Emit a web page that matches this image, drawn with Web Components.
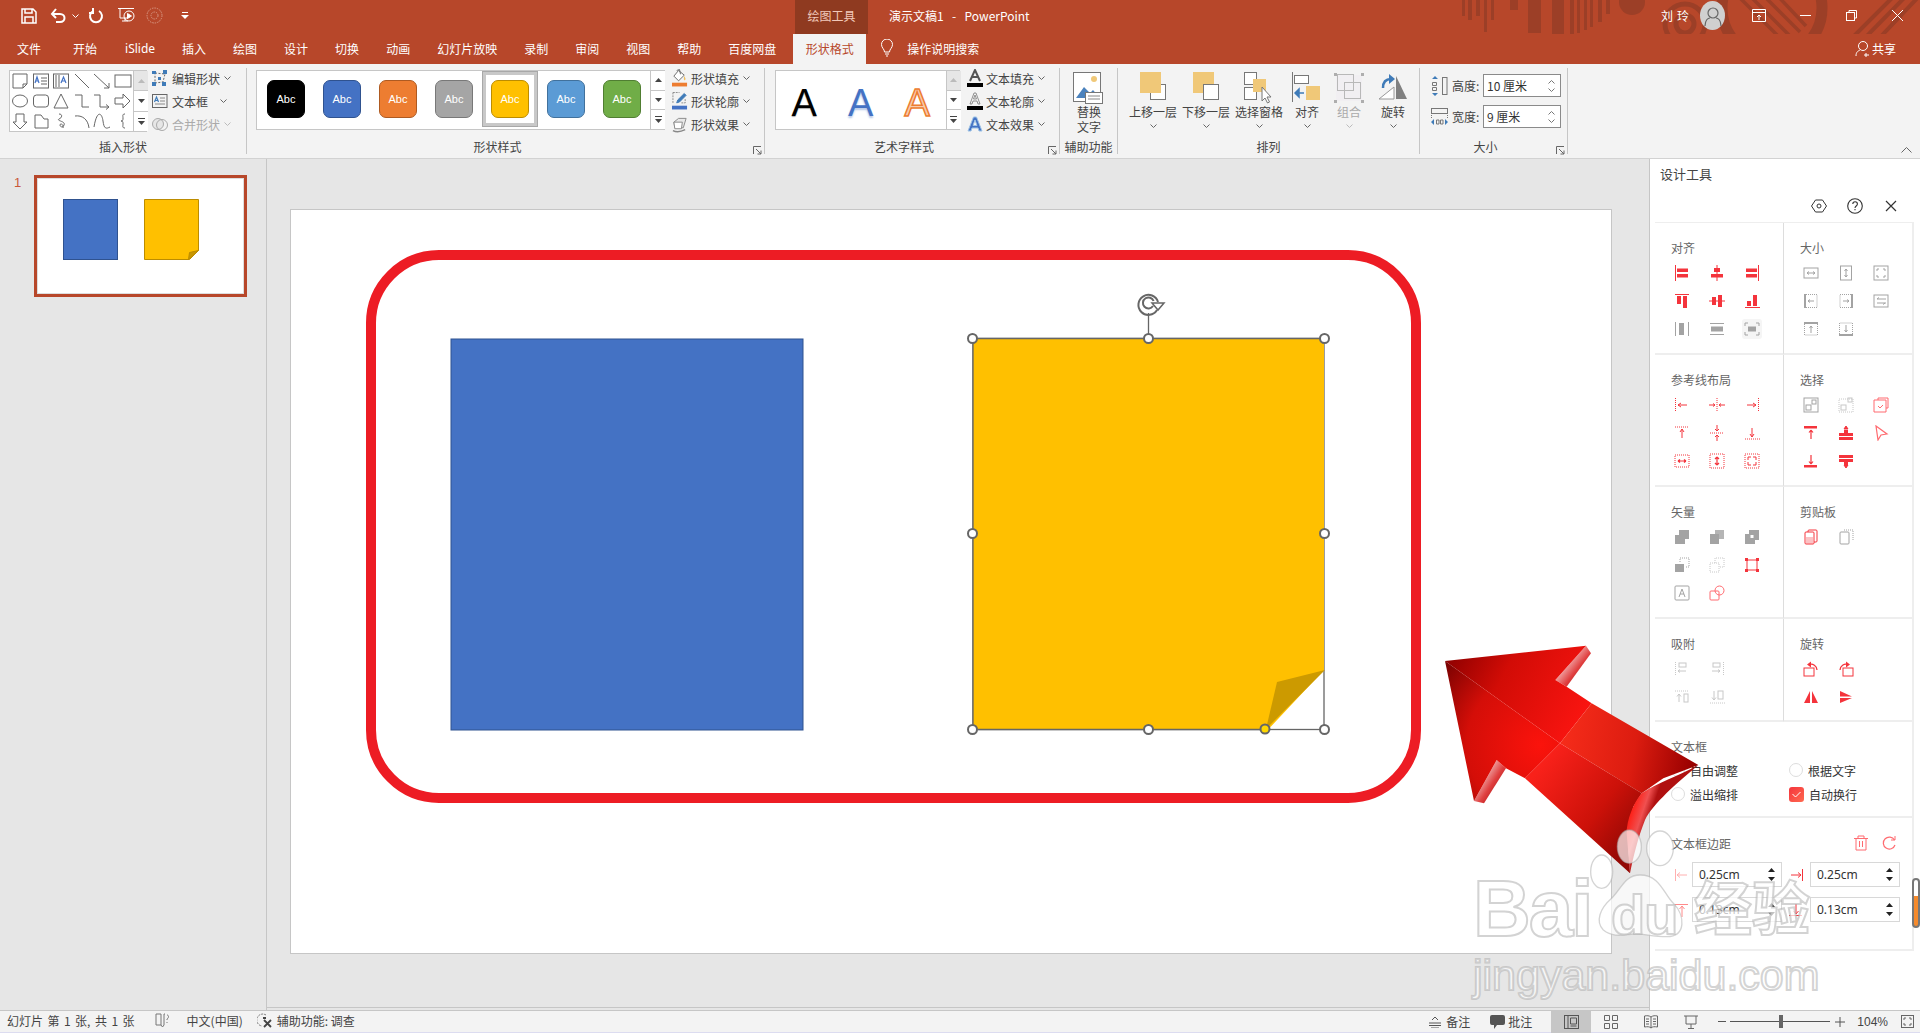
<!DOCTYPE html>
<html>
<head>
<meta charset="utf-8">
<title>PowerPoint</title>
<style>
html,body{margin:0;padding:0;width:1920px;height:1033px;overflow:hidden;background:#e6e6e6;}
body{font-family:"Noto Sans CJK SC","Liberation Sans",sans-serif;font-size:12px;color:#444;}
</style>
</head>
<body>
<ppt-app>
  <ppt-titlebar></ppt-titlebar>
  <ppt-tabs></ppt-tabs>
  <ppt-ribbon>
    <rb-group label="插入形状" style="width:247px">
      <shape-gallery style="margin:2px 0 0 9px"></shape-gallery>
      <rb-col style="margin-left:5px">
        <rb-btn icon="edit" text="编辑形状" gap="4"></rb-btn>
        <rb-btn icon="tbox" text="文本框" gap="12"></rb-btn>
        <rb-btn icon="merge" text="合并形状" gap="4" disabled></rb-btn>
      </rb-col>
    </rb-group>
    <rb-group label="形状样式" launcher style="width:518px">
      <style-gallery style="margin:2px 0 0 9px"></style-gallery>
      <rb-col style="margin-left:7px">
        <rb-btn icon="fill" text="形状填充" gap="4" tg="3"></rb-btn>
        <rb-btn icon="outline" text="形状轮廓" gap="4" tg="3"></rb-btn>
        <rb-btn icon="effect" text="形状效果" gap="4" tg="3"></rb-btn>
      </rb-col>
    </rb-group>
    <rb-group label="艺术字样式" launcher style="width:295px">
      <art-gallery style="margin:2px 0 0 10px"></art-gallery>
      <rb-col style="margin-left:7px">
        <rb-btn icon="tfill" text="文本填充" gap="4" tg="3"></rb-btn>
        <rb-btn icon="toutline" text="文本轮廓" gap="4" tg="3"></rb-btn>
        <rb-btn icon="teffect" text="文本效果" gap="4" tg="3"></rb-btn>
      </rb-col>
    </rb-group>
    <rb-group label="辅助功能" style="width:58px">
      <rb-big icon="alt" style="width:58px" nochev><span>替换</span><br><span>文字</span></rb-big>
    </rb-group>
    <rb-group label="排列" style="width:302px">
      <rb-big icon="fwd" style="width:54px;margin-left:8px">上移一层</rb-big>
      <rb-big icon="bwd" style="width:52px">下移一层</rb-big>
      <rb-big icon="pane" style="width:54px" nochev>选择窗格</rb-big>
      <rb-big icon="align" style="width:42px">对齐</rb-big>
      <rb-big icon="group" style="width:42px" disabled>组合</rb-big>
      <rb-big icon="rotate" style="width:46px">旋转</rb-big>
    </rb-group>
    <rb-group label="大小" launcher style="width:148px">
      <size-fields></size-fields>
    </rb-group>
    <rb-collapse></rb-collapse>
  </ppt-ribbon>
  <ppt-main>
    <ppt-thumbs></ppt-thumbs>
    <ppt-stage></ppt-stage>
    <design-panel></design-panel>
  </ppt-main>
  <ppt-status></ppt-status>
  <big-arrow></big-arrow>
  <baidu-mark></baidu-mark>
</ppt-app>

<script>
const R='#f4343c',G='#a3a3a3';
const bar=(d)=>`<path class="f" d="${d}"/>`;
const dot=(d)=>`<path stroke-dasharray="1 1" d="${d}"/>`;
const PANEL={
 alL:`<path d="M1.5 0v16"/>`+bar('M3 3.5h11v3.5H3zM3 9h11v3.5H3z'),
 alC:`<path d="M8 0v16"/>`+bar('M5 3h6v4H5zM2 9h12v3.5H2z'),
 alR:`<path d="M14.5 0v16"/>`+bar('M2 3.5h11v3.5H2zM2 9h11v3.5H2z'),
 alT:`<path d="M1 1.5h14"/>`+bar('M3 3h4v8H3zM9 3h4v12H9z'),
 alM:`<path d="M0 8h16"/>`+bar('M3 4h4v8H3zM9 2h4v12H9z'),
 alB:`<path d="M1 14.5h15"/>`+bar('M3 8h4v5H3zM9 2h4v11H9z'),
 dH:`<path d="M1.5 1v14M14.5 1v14"/>`+bar('M5 2h5v12H5z'),
 dV:`<path d="M1 2.5h14M1 13.5h14"/>`+bar('M2 5.5h12v5H2z'),
 dB:`<path d="M1 5V2h3M12 2h3v3M1 11v3h3M12 14h3v-3"/>`+bar('M4 5.5h8v5H4z'),
 sW:`<rect x="1" y="3" width="14" height="10"/><path d="M4 8h8M4 8l2-1.5M4 8l2 1.500M12 8l-2-1.500M12 8l-2 1.500"/>`,
 sH:`<rect x="2.500" y="1" width="11" height="14"/><path d="M8 4v8M8 4L6.500 6M8 4l1.500 2M8 12l-1.500-2M8 12l1.500-2"/>`,
 sB:`<rect x="1" y="1" width="14" height="14"/><path d="M4 6V4h2M10 4h2v2M4 10v2h2M10 12h2v-2"/>`,
 sL:`<path stroke-width="2" d="M2 1v14"/>`+dot('M3 1.500h11v13H3')+`<path d="M5 8h6M5 8l2-1.500M5 8l2 1.500"/>`,
 sR:`<path stroke-width="2" d="M14 1v14"/>`+dot('M13 1.500H2v13h11')+`<path d="M5 8h6M11 8L9 6.500M11 8L9 9.500"/>`,
 sLR:`<rect x="1" y="2" width="14" height="12"/><path d="M4 6h9M4 10h9M4 6l2-1.500M12 10l-2 1.500"/>`,
 sT:`<path stroke-width="2" d="M1 2h14"/>`+dot('M1.500 3v11h13V3')+`<path d="M8 5v7M8 5L6.500 7M8 5l1.500 2"/>`,
 sD:`<path stroke-width="2" d="M1 14h14"/>`+dot('M1.500 13V2h13v11')+`<path d="M8 4v7M8 11L6.500 9M8 11l1.500-2"/>`,
 gL:dot('M1.500 1v14')+`<path d="M4 8h9M4 8l3-2M4 8l3 2"/>`,
 gC:dot('M8 1v14')+`<path d="M0 8h6M6 8L4 6.500M6 8L4 9.500M16 8h-6M10 8l2-1.500M10 8l2 1.500"/>`,
 gR:dot('M14.500 1v14')+`<path d="M3 8h9M12 8L9 6M12 8l-3 2"/>`,
 gT:dot('M1 2h14')+`<path d="M8 4v9M8 4L6 7M8 4l2 3"/>`,
 gM:dot('M1 8h14')+`<path d="M8 0v6M8 6L6 4M8 6l2-2M8 16v-6M8 10l-2 2M8 10l2 2"/>`,
 gB:dot('M1 14h15')+`<path d="M8 3v9M8 12l-2-3M8 12l2-3"/>`,
 gW:dot('M1 2h14v12H1z')+`<path stroke-width="1.200" d="M4 8h8M4 8l2-1.500M4 8l2 1.500M12 8l-2-1.500M12 8l-2 1.500"/>`,
 gH:dot('M1 1h14v14H1z')+`<path stroke-width="1.200" d="M8 4v8M8 4L6 6M8 4l2 2M8 12l-2-2M8 12l2-2"/>`,
 gF:dot('M1 1h14v14H1z')+`<path d="M4 7V4h3M9 4h3v3M4 9v3h3M9 12h3V9"/>`,
 sl1:`<rect x="1" y="1" width="14" height="14"/><rect x="3" y="8" width="5" height="5"/><rect x="9" y="3" width="4" height="4"/>`,
 sl2:dot('M1 2h14v13H1z')+`<rect x="3" y="8" width="5" height="5"/><rect x="10" y="1" width="4" height="4"/>`,
 sl3:`<path d="M5 3V1h10v10h-2"/><path d="M3 3h10v12H1V3z"/><path d="M5 9l2 2 3-3"/>`,
 sl4:bar('M1 1h13v2.500H1z')+`<path stroke-width="1.200" d="M8 5v9M8 5L6 7.500M8 5l2 2.500"/>`,
 sl5:bar('M1 8h14v3H1zM1 12h14v3H1zM6 5h4v3H6z')+`<path d="M8 1L6 4h4z" fill="currentColor"/>`,
 sl6:`<path stroke-width="1.200" d="M3 1l11 8-6 1-3 5z"/>`,
 sl7:bar('M1 12h13v2.500H1z')+`<path stroke-width="1.200" d="M8 2v9M8 11L6 8.500M8 11l2-2.500"/>`,
 sl8:bar('M1 2h14v3H1zM1 6h14v3H1zM6 9h4v3H6z')+`<path d="M8 15l-2-3h4z" fill="currentColor"/>`,
 v1:bar('M5 1h10v9h-4v5H1V6h4z'),
 v2:bar('M1 5h9v10H1z')+`<rect class="f" x="6" y="1" width="9" height="9" opacity=".8"/>`,
 v3:bar('M5 1h10v10H11v4H1V5h4z')+`<rect x="6.500" y="6" width="3" height="3" fill="#fff" stroke="none"/>`,
 v4:bar('M1 7h9v8H1z')+dot('M6 5V1h9v9h-4'),
 v5:dot('M1 6h9v9H1zM6 6V1h9v9h-5'),
 v6:`<path d="M3 3h10v10H3z"/>`+bar('M1 1h3v3H1zM12 1h3v3h-3zM1 12h3v3H1zM12 12h3v3h-3z'),
 v7:`<rect x="1" y="1" width="14" height="14" rx="1"/><path d="M5 12l3-8 3 8M6 9h4"/>`,
 v8:`<rect x="1" y="6" width="9" height="9" rx="1"/><circle cx="10.500" cy="5.500" r="4.500" />`,
 cb1:`<rect x="5" y="1" width="9" height="12" rx="1"/><rect x="2" y="3" width="9" height="12" rx="1" fill="#fff"/><path class="f" opacity=".3" d="M3 8h7v6.500H3z"/>`,
 cb2:dot('M6 1h9v11')+`<rect x="2" y="3" width="9" height="12" rx="1"/>`,
 sn1:dot('M1.500 1v14')+`<rect x="5" y="2" width="7" height="4"/><path d="M4 10h8M4 10l2-1.500M4 10l2 1.500"/>`,
 sn2:dot('M14.500 1v14')+`<rect x="4" y="2" width="7" height="4"/><path d="M3 10h8M11 10L9 8.500M11 10L9 11.500"/>`,
 sn3:dot('M1 2h14')+`<rect x="10" y="5" width="4" height="8"/><path d="M5 5v8M5 5L3 7.500M5 5l2 2.500"/>`,
 sn4:dot('M1 14h15')+`<rect x="9" y="2" width="5" height="8"/><path d="M5 2v9M5 11L3 8.500M5 11l2-2.500"/>`,
 r1:`<rect x="1" y="7" width="10" height="8"/><path stroke-width="1.300" d="M14 9A6 6 0 0 0 6 3.500"/><path class="f" d="M8 .500v6L4 3.500z"/>`,
 r2:`<rect x="5" y="7" width="10" height="8"/><path stroke-width="1.300" d="M2 9A6 6 0 0 1 10 3.500"/><path class="f" d="M8 .500v6l4-3z"/>`,
 r3:bar('M7 2v12H1zM9 2l6 12H9z'),
 r4:bar('M2 2l12 5.500L2 7.500zM2 9l12 0L2 14z'),
 trash:`<path d="M1 3.500h14M5 3V1h6v2M3 4v11h10V4M6.500 6v6M9.500 6v6"/>`,
 redo:`<path stroke-width="1.200" d="M13.500 5A6 6 0 1 0 14 10"/><path d="M14 1v4h-4"/>`,
 inL:`<path d="M1.500 2v12M13 8H3M3 8l3-2.500M3 8l3 2.500"/>`,
 inR:`<path d="M14.500 2v12M3 8h10M13 8l-3-2.500M13 8l-3 2.500"/>`,
 inT:`<path d="M1 2.500h13M8 15V4M8 4L5.500 7M8 4l2.500 3"/>`,
 inB:`<path d="M1 13.500h13M8 2v10M8 12L5.500 9M8 12l2.500-3"/>`,
};
const CELLS={
 note:`<path d="M2 2h14v10l-4 4H2zM12 16v-4h4"/>`,
 tb:`<rect x="1.500" y="2" width="15" height="14"/><path d="M9 6h6M9 9h6M9 12h6"/><path stroke="#4472c4" stroke-width="1.200" d="M3 11l2-6 2 6M3.700 9h2.600"/>`,
 vtb:`<rect x="1.500" y="2" width="15" height="14"/><path d="M4 3v12M7 3v12"/><path stroke="#4472c4" stroke-width="1.200" d="M9 11l2.500-6 2.500 6M10 9h3"/>`,
 line:`<path d="M2 2l14 14"/>`,
 larrow:`<path d="M1 2l15 14M16 16v-5M16 16h-5"/>`,
 rect:`<rect x="1" y="3" width="16" height="12"/>`,
 oval:`<ellipse cx="9" cy="9" rx="7.500" ry="6"/>`,
 rrect:`<rect x="1.500" y="3" width="15" height="12" rx="3"/>`,
 tri:`<path d="M9 2l7 14H2z"/>`,
 elbow:`<path d="M2 3h7v12h7"/>`,
 elarrow:`<path d="M1 3h6v12h9M16 15l-3-2.500M16 15l-3 2.500"/>`,
 barrow:`<path d="M1 6h8V2l7 7-7 7v-4H1z"/>`,
 darrow:`<path d="M5 2h8v8h3l-7 7-7-7h3z"/>`,
 snip:`<path d="M3 3h6l3 4h4v9H3z"/>`,
 squig:`<path d="M7 2c4 0 3 4 0 5-3 2 7 2 5 6-1 3-4 2-4 0s4-1 3 3"/>`,
 arc:`<path d="M2 4c7-1 13 3 14 12"/>`,
 curve:`<path d="M1 15c3-18 8-14 9-6s3 8 7 6"/>`,
 brace:`<path d="M11 2C8 2 9 4 9 6s0 3-2 3c2 0 2 1 2 3s-1 4 2 4"/>`,
};
const BIG={
 alt:`<svg width="32" height="32" viewBox="0 0 32 32" fill="none"><rect x=".5" y=".5" width="27" height="29" fill="#fff" stroke="#777"/><circle cx="21" cy="7" r="3" fill="#f0c878"/><path d="M3 26l8-11 6 6 3-3 7 8z" fill="#4b82bd"/><rect x="12.500" y="20.500" width="17" height="11" fill="#fff" stroke="#777"/><path d="M15 24h12M15 27h12" stroke="#888"/></svg>`,
 fwd:`<svg width="26" height="32" viewBox="0 0 26 32"><rect x="10.500" y="12.500" width="15" height="15" fill="#fff" stroke="#777"/><rect x="0" y="0" width="21" height="21" fill="#f0c878"/></svg>`,
 bwd:`<svg width="26" height="32" viewBox="0 0 26 32"><rect x="0" y="0" width="21" height="21" fill="#f0c878"/><rect x="10.500" y="12.500" width="15" height="15" fill="#fff" stroke="#777"/></svg>`,
 pane:`<svg width="32" height="32" viewBox="0 0 32 32"><rect x="1.500" y=".5" width="12" height="12" fill="#fff" stroke="#777"/><rect x="1.500" y="15.500" width="12" height="12" fill="#fff" stroke="#777"/><rect x="10" y="7" width="13" height="13" fill="#f0c878"/><path d="M19 15v14l3-3 2.500 5 2-1-2.500-5h4z" fill="#fff" stroke="#777"/></svg>`,
 align:`<svg width="32" height="32" viewBox="0 0 32 32"><path d="M1.500 0v30" stroke="#777"/><rect x="3.500" y="3.500" width="14" height="8" fill="#fff" stroke="#777"/><rect x="15" y="14" width="14" height="14" fill="#f0c878"/><path d="M13 21H4M4 21l4-4v8z" fill="#3f7bb8" stroke="#3f7bb8" stroke-width="1.500"/></svg>`,
 group:`<svg width="32" height="32" viewBox="0 0 32 32" fill="none" opacity=".55"><rect x="3" y="3" width="26" height="26" fill="#f0ecf2"/><rect x="4.500" y="2.500" width="16" height="16" stroke="#888"/><rect x="11.500" y="10.500" width="16" height="16" stroke="#888"/><path d="M1 1h3v3H1zM28 1h3v3h-3zM1 28h3v3H1zM28 28h3v3h-3z" fill="#777"/></svg>`,
 rotate:`<svg width="32" height="32" viewBox="0 0 32 32" fill="none"><path d="M2 27L17 15v12z" fill="#fff" stroke="#999"/><path d="M19 4l11 23H19z" fill="#808080"/><path d="M6 16c0-6 3-9 8-9" stroke="#3f7bb8" stroke-width="2.500"/><path d="M12 2l6 5-6 5z" fill="#3f7bb8"/></svg>`,
};
const SMALL={
 edit:`<svg width="16" height="16" viewBox="0 0 16 16" fill="none"><path d="M3 3l10 1-2 8-8 1z" stroke="#666" stroke-dasharray="2 1.500"/><path d="M0 1h4v3H0zM11 0h4v4h-4zM6 7h3v3H6zM0 12h4v4H0zM10 12h4v4h-4z" fill="#3f7bb8"/></svg>`,
 tbox:`<svg width="16" height="16" viewBox="0 0 16 16" fill="none"><rect x=".5" y="1.500" width="14.500" height="13" stroke="#666"/><path d="M8 5h5M8 8h5M3 11h10" stroke="#888"/><path d="M2.500 9l2-5 2 5M3.300 7.500h2.400" stroke="#3f7bb8" stroke-width="1.200"/></svg>`,
 merge:`<svg width="16" height="16" viewBox="0 0 16 16" fill="none" stroke="#aaa"><circle cx="6" cy="8" r="5.500" fill="#e6e6e6"/><circle cx="10" cy="9" r="5.500"/></svg>`,
 fill:`<svg width="17" height="18" viewBox="0 0 17 18" fill="none"><path d="M7 1L2 7l5 5 6-6z" fill="#fff" stroke="#666"/><path d="M5 1l3-1 1 5" stroke="#666"/><path d="M13 7c1 2 2 3 1 4s-2 0-1-4z" fill="#f0c060"/><rect x="0" y="14" width="16" height="4" fill="#ed7d31"/></svg>`,
 outline:`<svg width="17" height="18" viewBox="0 0 17 18" fill="none"><path d="M1 0h7M1 0v11M10 11h4V6" stroke="#888" stroke-dasharray="2 1"/><path d="M13 1l2 2-7 7-3 1 1-3z" fill="#3f7bb8" stroke="#3f7bb8"/><rect x="0" y="14" width="16" height="4" fill="#4472c4"/></svg>`,
 effect:`<svg width="17" height="17" viewBox="0 0 17 17"><path d="M2 6l5-4h8l-3 10H3z" fill="#e8e8e8" stroke="#888"/><path d="M2 6h9l-1 7H3z" fill="#fff" stroke="#888"/><path d="M1 15c4 2 9 1 13-1" stroke="#888" fill="none" stroke-width="1.500"/></svg>`,
 tfill:`<svg width="16" height="18" viewBox="0 0 16 18" fill="none"><path d="M3 12L8 1l5 11M5 8h6" stroke="#555" stroke-width="2"/><rect x="0" y="14" width="16" height="4" fill="#000"/></svg>`,
 toutline:`<svg width="16" height="18" viewBox="0 0 16 18" fill="none"><path d="M3 12L7 1h2l4 11h-2l-1-3H6l-1 3zM6.500 7h3L8 3z" stroke="#777" stroke-width=".8"/><rect x="0" y="14" width="16" height="4" fill="#000"/></svg>`,
 teffect:`<svg width="16" height="16" viewBox="0 0 16 16"><path d="M1 15L6.500 1h3L15 15h-3l-1-3H5l-1 3zM6 9.500h4L8 4z" fill="#4472c4" stroke="#9dc3e6"/></svg>`,
};
const ico=(name,size=16)=>`<svg width="${size}" height="${size}" viewBox="0 0 16 16" fill="none" stroke="currentColor" stroke-width="1">${PANEL[name]||''}</svg>`;
const chev=(c='#666')=>`<svg width="7" height="4" viewBox="0 0 7 4" fill="none" stroke="${c}" stroke-width="1"><path d="M.5.5l3 3 3-3"/></svg>`;
const launcher=`<svg width="9" height="9" viewBox="0 0 9 9" fill="none" stroke="#666"><path d="M.5 8V.5H8M3 3l5 5M8 4.500V8H4.500"/></svg>`;

function def(name,css,html){
  customElements.define(name,class extends HTMLElement{
    connectedCallback(){
      if(this.shadowRoot)return;
      const r=this.attachShadow({mode:'open'});
      r.innerHTML=`<style>:host{box-sizing:border-box}*{box-sizing:border-box}.f{fill:currentColor;stroke:none}${css}</style>`+(typeof html==='function'?html(this):html);
    }
  });
}

def('ppt-app',`:host{display:flex;flex-direction:column;width:1920px;height:1033px;position:relative;overflow:hidden;}`,`<slot></slot>`);

def('ppt-titlebar',`
:host{display:flex;align-items:center;height:34px;padding-bottom:3px;background:#b7472a;color:#fff;position:relative;overflow:hidden;}
.q{position:relative;display:flex;align-items:center;justify-content:center;height:30px}
svg.d{position:absolute;left:1440px;top:0}
.ctx{position:relative;width:73px;height:34px;margin-bottom:-3px;padding-bottom:3px;background:#8f3a20;color:#f1c9bb;display:flex;align-items:center;justify-content:center;margin-left:605px;}
.t{position:relative;margin-left:21px;white-space:pre;word-spacing:1.500px}
.r{position:relative;margin-left:auto;display:flex;align-items:center;height:30px}
.name{letter-spacing:4px;margin-right:7px;margin-left:-1px}
.av{width:25px;height:29px;border-radius:50%;background:#d0d0d0;display:flex;align-items:center;justify-content:center;margin-right:11px}
.w{width:46px;height:30px;display:flex;align-items:center;justify-content:center}
`,`
<svg class="d" width="480" height="64" viewBox="1440 0 480 64" fill="#9c3f27">
 <path d="M1462 0h3v16h-3zM1468 0h4v20h-4zM1476 0h4v16h-4zM1484 0h3v32h-3zM1491 0h3v20h-3zM1510 0h8v10h-8zM1528 0h13v33h-13zM1552 0h12v37h-12zM1570 0h4v36h-4zM1577 0h3v33h-3zM1584 0h3v30h-3zM1590 0h3v27h-3zM1598 0h4v22h-4zM1606 0h4v14h-4z"/>
 <circle cx="1632" cy="2" r="13"/>
 <g fill="none" stroke="#9c3f27">
  <circle cx="1685" cy="24" r="20" stroke-width="5"/><circle cx="1685" cy="24" r="9" stroke-width="5"/>
  <circle cx="1772" cy="8" r="50" stroke-width="11"/>
  <path stroke-width="3.500" d="M1740-2l45 45M1750-4l42 42M1762-6l38 38M1774-8l32 34"/>
  <path stroke-width="4" d="M1845 45L1900-10M1855 48L1910-8M1868 50L1925-10"/>
 </g>
</svg>
<div class="q" style="width:20px;margin-left:19px"><svg width="16" height="16" viewBox="0 0 16 16" fill="none" stroke="#fff" stroke-width="1.500"><path d="M1 1h11l3 3v11H1zM4 1v4h7V1M4 15v-6h8v6"/></svg></div>
<div class="q" style="width:20px;margin-left:9px"><svg width="16" height="16" viewBox="0 0 16 16" fill="none" stroke="#fff" stroke-width="2"><path d="M3 6h7c6 0 6 8 0 8H6M6 1L2 6l4 4"/></svg></div>
<div class="q" style="width:10px;margin-left:2px">${chev('#fff')}</div>
<div class="q" style="width:20px;margin-left:6px"><svg width="16" height="16" viewBox="0 0 16 16" fill="none" stroke="#fff" stroke-width="2"><path d="M5 3a6 6 0 1 0 6 0M5 0v5H1"/></svg></div>
<div class="q" style="width:22px;margin-left:9px"><svg width="18" height="18" viewBox="0 0 18 18" fill="none" stroke="#fff"><path d="M1 1.500h16M3 2v9h8M5 14h6M8 11v3"/><circle cx="12" cy="9" r="5"/><path d="M10.500 6.500v5l4-2.500z" fill="#fff"/></svg></div>
<div class="q" style="width:20px;margin-left:7px"><svg width="17" height="17" viewBox="0 0 17 17" fill="none" stroke="#d99a86" stroke-dasharray="1.500 1"><circle cx="8.500" cy="8.500" r="7.500"/><circle cx="8.500" cy="8.500" r="3.500"/></svg></div>
<div class="q" style="width:10px;margin-left:16px"><svg width="8" height="8" viewBox="0 0 8 8" fill="#fff"><path d="M1 0h6v1H1zM0 3h8L4 7z"/></svg></div>
<div class="ctx">绘图工具</div>
<div class="t">演示文稿1  -  PowerPoint</div>
<div class="r">
 <span class="name">刘玲</span>
 <div class="av"><svg width="18" height="22" viewBox="0 0 18 22" fill="none" stroke="#666" stroke-width="1.200"><circle cx="9" cy="8" r="5"/><path d="M1 21c0-6 3-8 5-8M17 21c0-6-3-8-5-8"/></svg></div>
 <div class="w"><svg width="14" height="13" viewBox="0 0 14 13" fill="none" stroke="#fff"><path d="M.5.500h13v12H.5zM.5 3.500h13M7 11V6M5 8l2-2 2 2"/></svg></div>
 <div class="w"><svg width="11" height="1"><rect width="11" height="1" fill="#fff"/></svg></div>
 <div class="w"><svg width="11" height="11" viewBox="0 0 11 11" fill="none" stroke="#fff"><rect x=".5" y="2.500" width="8" height="8"/><path d="M3 2V.5h7.500V8H9"/></svg></div>
 <div class="w"><svg width="11" height="11" viewBox="0 0 11 11" stroke="#fff"><path d="M0 0l11 11M11 0L0 11"/></svg></div>
</div>`);

def('ppt-tabs',`
:host{display:flex;align-items:center;height:30px;background:#b7472a;color:#fff;position:relative;}
.a{display:flex;align-items:center;height:28px;margin-bottom:2px}
span{display:block;white-space:nowrap;margin-right:27px}
.cur{width:73px;height:30px;padding-bottom:2px;background:#f3f3f3;color:#b7472a;display:flex;align-items:center;justify-content:center;margin-left:-10px;}
.s{margin:0 0 2px 14px;display:flex;align-items:center}
.sh{margin:0 24px 2px auto;display:flex;align-items:center;gap:0}
`,`
<div class="a" style="margin-left:17px"><span style="margin-right:32px">文件</span><span style="margin-right:28px">开始</span><span style="font-family:'Noto Sans',sans-serif">iSlide</span></div>
<div class="a"><span>插入</span><span>绘图</span><span>设计</span><span>切换</span><span>动画</span><span>幻灯片放映</span><span>录制</span><span>审阅</span><span>视图</span><span>帮助</span><span>百度网盘</span></div>
<div class="cur">形状格式</div>
<div class="s"><svg width="14" height="18" viewBox="0 0 14 18" fill="none" stroke="#fff"><path d="M4.500 13c0-3-3-4-3-7.500a5.500 5.500 0 0 1 11 0C12.500 9 9.500 10 9.500 13zM5 15h4M6 17h2"/></svg><span style="margin:0 0 0 13px">操作说明搜索</span></div>
<div class="sh"><svg width="17" height="17" viewBox="0 0 17 17" fill="none" stroke="#fff"><circle cx="8" cy="6" r="4.500"/><path d="M1 16c0-4 2-5 4-6M11 13v4M9 15h5"/></svg><span style="margin:0">共享</span></div>`);

def('ppt-ribbon',`:host{display:flex;height:95px;background:#f3f3f3;border-bottom:1px solid #d2d2d2;padding-top:4px;}`,`<slot></slot>`);

def('rb-group',`
:host{display:flex;flex-direction:column;height:86px;border-right:1px solid #c6c6c6;flex:none}
.c{flex:1;display:flex;min-height:0}
.b{display:flex;height:14px;align-items:center;flex:none}
.l{flex:1;text-align:center;line-height:14px;white-space:nowrap;color:#444}
.x{width:16px;display:flex;justify-content:center;padding:6px 0 0 3px}
`,(h)=>`<div class="c"><slot></slot></div><div class="b"><div class="l">${h.getAttribute('label')}</div>${h.hasAttribute('launcher')?`<div class="x">${launcher}</div>`:''}</div>`);

def('rb-col',`:host{display:flex;flex-direction:column;gap:7px;margin-top:2px;flex:none}`,`<slot></slot>`);

def('rb-btn',`
:host{display:flex;align-items:center;height:16px;white-space:nowrap;color:#444}
:host([disabled]){color:#aaa}
.i{width:16px;height:16px;display:flex;align-items:center;justify-content:center;flex:none}
`,(h)=>`<div class="i">${SMALL[h.getAttribute('icon')]}</div><span style="margin-left:${h.getAttribute('tg')||4}px">${h.getAttribute('text')}</span><span style="margin-left:${h.getAttribute('gap')}px;display:flex">${chev(h.hasAttribute('disabled')?'#bbb':'#666')}</span>`);

def('rb-big',`
:host{display:flex;flex-direction:column;align-items:center;color:#444;flex:none;text-align:center}
:host([disabled]){color:#aaa}
.i{height:32px;margin-top:4px;display:flex;justify-content:center}
.t{line-height:15px;white-space:nowrap;height:30px}
.c{margin-top:-12px;height:8px;display:flex;align-items:center}
`,(h)=>`<div class="i">${BIG[h.getAttribute('icon')]}</div><div class="t"><slot></slot></div>${h.hasAttribute('nochev')&&h.getAttribute('icon')==='alt'?'':`<div class="c">${chev(h.hasAttribute('disabled')?'#bbb':'#666')}</div>`}`);

def('scroll-strip',`
:host{display:flex;flex-direction:column;width:15px;height:100%;flex:none;border-left:1px solid #c6c6c6}
div{flex:1;display:flex;align-items:center;justify-content:center;border-bottom:1px solid #c6c6c6;background:#fff}
div:last-child{border-bottom:0}
.d{background:#e6e6e6}
`,(h)=>`<div class="${h.hasAttribute('off')?'d':''}"><svg width="7" height="4" viewBox="0 0 7 4" fill="${h.hasAttribute('off')?'#bbb':'#444'}"><path d="M3.500 0l3.500 4H0z"/></svg></div><div><svg width="7" height="4" viewBox="0 0 7 4" fill="#444"><path d="M0 0h7L3.500 4z"/></svg></div><div><svg width="7" height="7" viewBox="0 0 7 7" fill="#444"><path d="M0 0h7v1H0zM0 3h7L3.500 7z"/></svg></div>`);

def('shape-gallery',`
:host{display:flex;width:138px;height:62px;border:1px solid #c6c6c6;background:#fff;flex:none}
.g{display:grid;grid-template-columns:repeat(6,20.500px);grid-template-rows:repeat(3,20px);flex:1;color:#666}
.g div{display:flex;align-items:center;justify-content:center}
`,()=>{
  const n=['note','tb','vtb','line','larrow','rect','oval','rrect','tri','elbow','elarrow','barrow','darrow','snip','squig','arc','curve','brace'];
  return `<div class="g">${n.map(k=>`<div><svg width="18" height="18" viewBox="0 0 18 18" fill="none" stroke="#666">${CELLS[k]}</svg></div>`).join('')}</div><scroll-strip off></scroll-strip>`;
});

def('style-chip',`
:host{display:flex;width:56px;height:100%;align-items:center;justify-content:center;flex:none;position:relative}
.b{width:38px;height:38px;border-radius:7px;display:flex;align-items:center;justify-content:center;color:#fff;font:11px "Liberation Sans",sans-serif;border:1px solid}
.sel{width:56px;height:56px;border:1px solid #a8a8a8;outline:3px solid #c8c8c8;outline-offset:-4px;background:#fff;display:flex;align-items:center;justify-content:center}
`,(h)=>{const b=`<div class="b" style="background:${h.getAttribute('c')};border-color:${h.getAttribute('b')}">Abc</div>`;return h.hasAttribute('sel')?`<div class="sel">${b}</div>`:b;});

def('style-gallery',`
:host{display:flex;width:409px;height:60px;border:1px solid #c6c6c6;background:#fff;flex:none}
.g{display:flex;flex:1;padding:0 0 2px 1px}
`,`<div class="g">
<style-chip c="#000" b="#000"></style-chip><style-chip c="#4472c4" b="#2f528f"></style-chip><style-chip c="#ed7d31" b="#ae5a21"></style-chip><style-chip c="#a5a5a5" b="#787878"></style-chip><style-chip c="#ffc000" b="#bc8c00" sel></style-chip><style-chip c="#5b9bd5" b="#41719c"></style-chip><style-chip c="#70ad47" b="#507e32"></style-chip>
</div><scroll-strip></scroll-strip>`);

def('art-gallery',`
:host{display:flex;width:185px;height:60px;border:1px solid #c6c6c6;background:#fff;flex:none}
.g{display:flex;flex:1}
.g div{width:56.500px;display:flex;align-items:center;justify-content:center;font:38px/1 "Liberation Sans",sans-serif;padding-top:5px}
`,`<div class="g"><div style="color:#000;text-shadow:0 1px 1px #aaa">A</div><div style="color:#4472c4;text-shadow:0 2px 2px #b4c7e7">A</div><div style="color:#f8cbad;-webkit-text-stroke:1.500px #ed7d31">A</div></div><scroll-strip off></scroll-strip>`);

def('size-fields',`
:host{display:flex;flex-direction:column;gap:8px;padding:6px 0 0 11px;}
.r{display:flex;align-items:center;height:23px}
.i{width:18px;flex:none;display:flex}
.l{width:34px;padding-left:3px;white-space:nowrap;flex:none;color:#444}
.b{width:78px;height:23px;border:1px solid #8a8a8a;background:#fff;display:flex;align-items:center;padding-left:3px;font-size:12px;color:#333}
.b span{flex:1;white-space:pre}
.s{display:flex;flex-direction:column;gap:4px;padding-right:5px}
`,()=>`<div class="r"><div class="i"><svg width="17" height="20" viewBox="0 0 17 20" fill="none"><rect x="11.500" y="1.500" width="4.500" height="17" stroke="#777"/><path d="M4 0l3 3H1zM4 20l3-3H1z" fill="#3f7bb8"/><path d="M1.500 6.500h4v3h-4zM1.500 11.500h4v3h-4z" stroke="#777"/></svg></div><div class="l">高度:</div><div class="b"><span>10 厘米</span><div class="s">${chev2()}</div></div></div>
<div class="r"><div class="i"><svg width="17" height="20" viewBox="0 0 17 20" fill="none"><rect x=".5" y="1.500" width="16" height="5" stroke="#777"/><path d="M0 15l3-3v6zM17 15l-3-3v6z" fill="#3f7bb8"/><path d="M5.500 13h2.500v4H5.500zM9.500 13h2.500v4H9.500z" stroke="#777"/><path d="M.5 8v3M16.500 8v3" stroke="#777" stroke-dasharray="1 1"/></svg></div><div class="l">宽度:</div><div class="b"><span>9 厘米</span><div class="s">${chev2()}</div></div></div>`);
function chev2(){return `<svg width="7" height="4" viewBox="0 0 7 4" fill="none" stroke="#777"><path d="M.5 3.500l3-3 3 3"/></svg><svg width="7" height="4" viewBox="0 0 7 4" fill="none" stroke="#777"><path d="M.5.500l3 3 3-3"/></svg>`;}

def('rb-collapse',`:host{flex:1;display:flex;justify-content:flex-end;align-items:flex-end;padding:0 8px 1px 0;height:86px}`,`<svg width="11" height="6" viewBox="0 0 11 6" fill="none" stroke="#666"><path d="M.5 5.500l5-5 5 5"/></svg>`);

def('ppt-main',`:host{display:flex;height:851px;flex:none;background:#e6e6e6}`,`<slot></slot>`);

def('ppt-thumbs',`
:host{display:flex;width:267px;border-right:1px solid #c6c6c6;padding:16px 0 0 14px;align-items:flex-start;gap:0;flex:none}
.n{width:20px;color:#c9583a;font:13px "Liberation Sans",sans-serif;margin-top:0;}
.t{width:213px;height:122px;border:3px solid #b7472a;background:#fff;box-shadow:inset 0 0 0 1px #ddd;display:block}
`,`<div class="n">1</div><svg class="t" viewBox="37 178 207 116"><rect x="63.500" y="199.500" width="54" height="60" fill="#4472c4" stroke="#2f528f"/><path d="M144.500 199.500h54v51l-9 9h-45z" fill="#ffc000" stroke="#bc8c00"/><path d="M198.500 250.500l-9 2-1 7z" fill="#c89600" stroke="#bc8c00"/></svg>`);

def('ppt-stage',`
:host{display:block;flex:1;min-width:0;padding:50px 0 0 23px;position:relative;}
:host::after{content:"";position:absolute;left:0;right:0;top:848px;height:1px;background:#c6c6c6}
.s{width:1322px;height:745px;background:#fff;border:1px solid #c6c6c6;display:block}
`,`<svg class="s" viewBox="291 210 1320 743">
<rect x="371" y="255" width="1045" height="543" rx="68" fill="none" stroke="#ed1c24" stroke-width="10"/>
<rect x="451" y="339" width="352" height="391" fill="#4472c4" stroke="#2f528f"/>
<rect x="973" y="338.500" width="351" height="391" fill="#fff" stroke="#666" stroke-width="1.300"/>
<path d="M973 338.500h351v331.500L1268 729.500H973z" fill="#ffc000" stroke="none"/>
<path d="M973 729.500V338.500h351" fill="none" stroke="#666" stroke-width="1.300"/>
<path d="M973 729.500h292" fill="none" stroke="#666" stroke-width="1.300"/>
<path d="M1325 670l-48 12-11 47z" fill="#cc9a00"/>
<path d="M1148.500 338v-25" stroke="#666" stroke-width="1.300"/>
<g fill="none" stroke="#666" stroke-width="2"><path d="M1157 310a10 10 0 1 1 1-8"/><path d="M1153 306a5.500 5.500 0 1 1 .6-5"/></g><path d="M1152 303h12l-6 7z" fill="#fff" stroke="#666" stroke-width="1.500"/>
<g fill="#fff" stroke="#666" stroke-width="2">
<circle cx="972.500" cy="338.500" r="4.500"/><circle cx="1148.500" cy="338.500" r="4.500"/><circle cx="1324.500" cy="338.500" r="4.500"/>
<circle cx="972.500" cy="533.500" r="4.500"/><circle cx="1324.500" cy="533.500" r="4.500"/>
<circle cx="972.500" cy="729.500" r="4.500"/><circle cx="1148.500" cy="729.500" r="4.500"/><circle cx="1324.500" cy="729.500" r="4.500"/>
<circle cx="1265" cy="729" r="4.500" fill="#ffd800"/></g>
</svg>`);

def('tool-grid',`
:host{display:grid;grid-template-columns:repeat(3,35.300px);grid-auto-rows:28px;padding-left:9px;margin-top:3px}
div{display:flex;align-items:center;justify-content:center}
.hb{width:20px;height:20px;background:#f5f5f5;border-radius:3px;display:flex;align-items:center;justify-content:center}
`,(h)=>h.getAttribute('items').split(' ').map(t=>{
  if(t==='_')return '<div></div>';
  const [n,c]=t.split(':');
  const col=c==='r'?R:c==='p'?'#ff6b70':c==='g'?G:c==='q'?'#c8c8c8':'#888';
  const inner=`<span style="color:${col};display:flex">${ico(n)}</span>`;
  return `<div>${n==='dB'?`<span class="hb">${inner}</span>`:inner}</div>`;
}).join(''));

def('panel-sec',`
:host{display:block;padding-top:17px;position:relative}
.h{height:16px;line-height:16px;padding-left:16px;color:#666;white-space:nowrap}
`,(h)=>`<div class="h">${h.getAttribute('t')}</div><slot></slot>`);

def('num-input',`
:host{display:flex;align-items:center;width:90px;height:25px;border:1px solid #d8d8d8;background:#fff;padding:0 6px 0 6px;font:12px "Noto Sans",sans-serif;color:#333;flex:none}
span{flex:1}
.s{display:flex;flex-direction:column;gap:5px}
`,(h)=>`<span>${h.getAttribute('v')}</span><div class="s"><svg width="7" height="4" viewBox="0 0 7 4"><path d="M3.500 0L7 4H0z" fill="#222"/></svg><svg width="7" height="4" viewBox="0 0 7 4"><path d="M0 0h7L3.500 4z" fill="#222"/></svg></div>`);

def('radio-opt',`
:host{display:flex;align-items:center;gap:5px;height:24px;color:#333;white-space:nowrap;flex:none;width:118px;padding-left:0}
.o{width:14px;height:14px;border-radius:50%;border:1px solid #ddd;background:#fff;flex:none}
.k{width:15px;height:15px;border-radius:3px;background:linear-gradient(135deg,#f4343c,#ff6a50);flex:none;display:flex;align-items:center;justify-content:center}
`,(h)=>`${h.hasAttribute('check')?`<div class="k"><svg width="9" height="7" viewBox="0 0 9 7" fill="none" stroke="#fff"><path d="M.5 3l3 3 5-5"/></svg></div>`:`<div class="o"></div>`}<span>${h.getAttribute('t')}</span>`);

def('design-panel',`
:host{display:block;width:271px;background:#fff;border-left:1px solid #c6c6c6;flex:none;position:relative}
.title{height:30px;padding:6px 0 0 10px;font-size:13px;line-height:17px;color:#444}
.ic{height:33px;display:flex;justify-content:flex-end;align-items:center;gap:20px;padding-right:21px;color:#333}
.body{width:259px;margin-left:5px;border-right:2px solid #eee;border-bottom:2px solid #eee;border-top:1px solid #eee}
.grid{display:grid;grid-template-columns:129px 129px;grid-template-rows:132px 132px 132px 103px}
.grid panel-sec{border-bottom:2px solid #eee}
.grid panel-sec:nth-child(odd){border-right:1px solid #ddd}
.tb{height:96px;border-bottom:2px solid #eee;padding:17px 0 0 16px}
.h{height:16px;line-height:16px;color:#666;white-space:nowrap}
.row{display:flex;padding-left:0}
.h+.row{margin-top:3px}
.mg{padding:17px 0 0 16px;height:131px}
.mh{display:flex;align-items:center;height:16px;color:#666;padding-right:15px}
.mh span{flex:1}
.mr{display:flex;align-items:center;margin-top:11px;}
.mr+.mr{margin-top:10px}
.mr span.i{width:21px;display:flex;justify-content:center}
.mr span.j{width:28px;display:flex;justify-content:center}
.scr{position:absolute;right:0;top:719px;width:8px;height:50px;border:2px solid #777;border-radius:4px;background:linear-gradient(#fff 34%,#f58a2c 34%)}
`,()=>`
<div class="title">设计工具</div>
<div class="ic">
 <svg width="16" height="16" viewBox="0 0 16 16" fill="none" stroke="#333"><path d="M4.500 2h7L15.500 8l-4 6h-7L.5 8z"/><circle cx="8" cy="8" r="2"/></svg>
 <svg width="16" height="16" viewBox="0 0 16 16" fill="none" stroke="#333" stroke-width="1.100"><circle cx="8" cy="8" r="7.300"/><path d="M5.800 6c0-3 4.600-3 4.600 0 0 2-2.400 2-2.400 4M8 11v1.300"/></svg>
 <svg width="16" height="16" viewBox="0 0 16 16" stroke="#333" stroke-width="1.200"><path d="M3 3l10 10M13 3L3 13"/></svg>
</div>
<div class="body">
 <div class="grid">
  <panel-sec t="对齐"><tool-grid items="alL:r alC:r alR:r alT:r alM:r alB:r dH:g dV:g dB:g"></tool-grid></panel-sec>
  <panel-sec t="大小"><tool-grid items="sW:g sH:g sB:g sL:g sR:g sLR:g sT:g sD:g"></tool-grid></panel-sec>
  <panel-sec t="参考线布局"><tool-grid items="gL:r gC:r gR:r gT:r gM:r gB:r gW:r gH:r gF:r"></tool-grid></panel-sec>
  <panel-sec t="选择"><tool-grid items="sl1:g sl2:q sl3:p sl4:r sl5:r sl6:p sl7:r sl8:r"></tool-grid></panel-sec>
  <panel-sec t="矢量"><tool-grid items="v1:g v2:g v3:g v4:g v5:q v6:r v7:g v8:p"></tool-grid></panel-sec>
  <panel-sec t="剪贴板"><tool-grid items="cb1:r cb2:g"></tool-grid></panel-sec>
  <panel-sec t="吸附"><tool-grid items="sn1:q sn2:q _ sn3:q sn4:q"></tool-grid></panel-sec>
  <panel-sec t="旋转"><tool-grid items="r1:r r2:r _ r3:r r4:r"></tool-grid></panel-sec>
 </div>
 <div class="tb">
  <div class="h">文本框</div>
  <div class="row"><radio-opt t="自由调整"></radio-opt><radio-opt t="根据文字"></radio-opt></div>
  <div class="row"><radio-opt t="溢出缩排"></radio-opt><radio-opt t="自动换行" check></radio-opt></div>
 </div>
 <div class="mg">
  <div class="mh"><span>文本框边距</span><i style="color:#ff6b70;display:flex;margin-right:12px">${ico('trash')}</i><i style="color:#ff6b70;display:flex">${ico('redo')}</i></div>
  <div class="mr"><span class="i" style="color:#ffb0b0">${ico('inL')}</span><num-input v="0.25cm"></num-input><span class="j" style="color:${R}">${ico('inR')}</span><num-input v="0.25cm"></num-input></div>
  <div class="mr"><span class="i" style="color:#ff8a8a">${ico('inT')}</span><num-input v="0.13cm"></num-input><span class="j" style="color:${R}">${ico('inB')}</span><num-input v="0.13cm"></num-input></div>
 </div>
</div>
<div class="scr"></div>`);

def('ppt-status',`
:host{display:flex;align-items:center;height:23px;padding-bottom:2px;background:#f3f3f3;border-top:1px solid #c6c6c6;border-bottom:1px solid #dcdcf0;flex:none;color:#444;white-space:pre}
.sp{display:flex;align-items:center;margin-bottom:-2px}
.v{width:40px;height:22px;display:flex;align-items:center;justify-content:center;flex:none}
.on{background:#c6c6c6}
`,`
<span style="margin-left:7px;word-spacing:1.800px">幻灯片 第 1 张, 共 1 张</span>
<svg style="margin-left:20px" width="15" height="15" viewBox="0 0 15 15" fill="none" stroke="#777"><path d="M1 1h5v11H1zM6 12l1.500 2L9 12V1h1M12 2c2 0 2 3 0 4v1M12 9v1"/></svg>
<span style="margin-left:17px">中文(中国)</span>
<svg style="margin-left:14px" width="16" height="16" viewBox="0 0 16 16" fill="none"><path d="M9 2A6 6 0 1 0 5 13" stroke="#777" stroke-dasharray="2 1"/><path d="M6 5h3M7 7l7 7M14 7l-7 7" stroke="#444" stroke-width="1.800"/></svg>
<span style="margin-left:4px">辅助功能: 调查</span>
<div class="sp" style="margin-left:auto">
 <svg width="12" height="12" viewBox="0 0 12 12" stroke="#555" fill="none"><path d="M0 7h12M0 9.500h12M2 12h8M3 4l3-3 3 3"/></svg>
 <span style="margin:0 20px 0 5px">备注</span>
 <svg width="15" height="14" viewBox="0 0 15 14" fill="#555"><path d="M2 0h11a2 2 0 0 1 2 2v6a2 2 0 0 1-2 2H7l-3 4v-4H2a2 2 0 0 1-2-2V2a2 2 0 0 1 2-2z"/></svg>
 <span style="margin:0 19px 0 3px">批注</span>
 <div class="v on"><svg width="15" height="14" viewBox="0 0 15 14" fill="none" stroke="#555"><rect x=".5" y=".5" width="14" height="13"/><path d="M4 .5v13M6.500 3h6v6h-6zM6.500 11h6"/></svg></div>
 <div class="v"><svg width="14" height="14" viewBox="0 0 14 14" fill="none" stroke="#666"><path d="M.5.500h5v5h-5zM8.500.500h5v5h-5zM.5 8.500h5v5h-5zM8.500 8.500h5v5h-5z"/></svg></div>
 <div class="v"><svg width="14" height="14" viewBox="0 0 14 14" fill="none" stroke="#666"><path d="M7 2C5 .5 3 .5.500 1v11c3-.5 5-.5 6.500 1 1.500-1.500 3.500-1.500 6.500-1V1C11 .5 9 .5 7 2zM7 2v11M2 4h3M2 6.500h3M2 9h3M9 4h3M9 6.500h3M9 9h3"/></svg></div>
 <div class="v"><svg width="14" height="14" viewBox="0 0 14 14" fill="none" stroke="#666"><path d="M0 1h14M2 1v8h10V1M7 9v4M4 13.500h6"/></svg></div>
 <div style="width:8px;height:1px;background:#555;margin:0 4px 0 7px"></div>
 <div style="position:relative;width:100px;height:1px;background:#555;margin:0 5px 0 0"><div style="position:absolute;left:49px;top:-6px;width:4px;height:13px;background:#666"></div></div>
 <svg width="10" height="10" viewBox="0 0 10 10" stroke="#555"><path d="M0 5h10M5 0v10"/></svg>
 <span style="margin:0 13px 0 12px;font-family:'Liberation Sans',sans-serif">104%</span>
 <svg style="margin-right:6px" width="13" height="13" viewBox="0 0 13 13" fill="none" stroke="#666"><rect x=".5" y=".5" width="12" height="12"/><path d="M3 3h2M3 3v2M10 3H8M10 3v2M3 10h2M3 10V8M10 10H8M10 10V8"/></svg>
</div>`);

def('big-arrow',`:host{position:absolute;left:1400px;top:630px;width:520px;height:403px;pointer-events:none}svg{display:block}`,`
<svg width="520" height="403" viewBox="0 0 1560 1209">
<defs>
<linearGradient id="a1" x1="135" y1="93" x2="520" y2="300" gradientUnits="userSpaceOnUse"><stop offset="0" stop-color="#8e0000"/><stop offset=".4" stop-color="#d20c06"/><stop offset="1" stop-color="#f81410"/></linearGradient>
<radialGradient id="a2" cx="420" cy="345" r="400" gradientUnits="userSpaceOnUse"><stop offset="0" stop-color="#fb130c"/><stop offset=".55" stop-color="#d40e08"/><stop offset="1" stop-color="#6a0000"/></radialGradient>
<linearGradient id="a3" x1="480" y1="330" x2="880" y2="410" gradientUnits="userSpaceOnUse"><stop offset="0" stop-color="#f62c1a"/><stop offset=".55" stop-color="#dc1c10"/><stop offset="1" stop-color="#980000"/></linearGradient>
<linearGradient id="a4" x1="430" y1="400" x2="720" y2="620" gradientUnits="userSpaceOnUse"><stop offset="0" stop-color="#f8211a"/><stop offset=".6" stop-color="#cc1109"/><stop offset="1" stop-color="#920804"/></linearGradient>
<linearGradient id="b1" x1="480" y1="130" x2="530" y2="170" gradientUnits="userSpaceOnUse"><stop offset="0" stop-color="#f0a0a0"/><stop offset=".5" stop-color="#e04040"/><stop offset="1" stop-color="#b01010"/></linearGradient>
<linearGradient id="b2" x1="240" y1="450" x2="300" y2="490" gradientUnits="userSpaceOnUse"><stop offset="0" stop-color="#f0b0b0"/><stop offset=".5" stop-color="#e04040"/><stop offset="1" stop-color="#b01010"/></linearGradient>
<linearGradient id="b3" x1="690" y1="540" x2="750" y2="560" gradientUnits="userSpaceOnUse"><stop offset="0" stop-color="#ff1a10"/><stop offset=".6" stop-color="#f05050"/><stop offset="1" stop-color="#b01010"/></linearGradient>
</defs>
<path fill="url(#b1)" d="M558 47l15 23-73 100-34-20z"/>
<path fill="url(#b2)" d="M222 513l30 7 66-105-28-25z"/>
<path fill="url(#a1)" d="M135 93L558 47 466 150 500 170 575 220 480 340z"/>
<path fill="url(#a2)" d="M135 93L480 340 375 445 318 415 290 390 222 513z"/>
<path fill="url(#a3)" d="M575 220L895 405 790 445 725 490 480 340z"/>
<path fill="url(#a4)" d="M480 340L725 490 700 530 682 600 690 730 375 445z"/>
<path fill="url(#b3)" d="M895 405C830 440 770 460 725 490 700 520 680 570 680 610L690 730C700 680 715 620 735 570 760 520 830 460 895 405z"/>
</svg>`);

def('baidu-mark',`
:host{position:absolute;left:0;top:0;width:1920px;height:1033px;pointer-events:none}
div{position:absolute;white-space:nowrap;color:rgba(255,255,255,.72);-webkit-text-stroke:2px rgba(175,175,175,.55);font-family:"Liberation Sans",sans-serif;font-weight:700;line-height:1}
svg{position:absolute;left:1400px;top:630px}
`,`
<svg width="520" height="403" viewBox="0 0 1560 1209" fill="rgba(255,255,255,.7)" stroke="rgba(170,170,170,.5)" stroke-width="4">
<ellipse cx="688" cy="650" rx="36" ry="50"/><ellipse cx="780" cy="655" rx="40" ry="52"/><ellipse cx="605" cy="725" rx="33" ry="50"/>
<path d="M720 735c60 0 70 55 100 85 35 35 40 100-20 100-45 0-70-10-100-8-30 2-60 12-90-12-25-25-10-65 25-95 30-30 40-70 85-70z"/>
</svg>
<div style="left:1473px;top:869px;font-size:80px;letter-spacing:-2px">Bai</div>
<div style="left:1611px;top:887px;font-size:56px;letter-spacing:-1px">du</div>
<div style="left:1694px;top:876px;font-size:58px;font-family:'Noto Sans CJK SC',sans-serif">经验</div>
<div style="left:1473px;top:954px;font-size:43px;font-weight:400">jingyan.baidu.com</div>`);
</script>
</body>
</html>
